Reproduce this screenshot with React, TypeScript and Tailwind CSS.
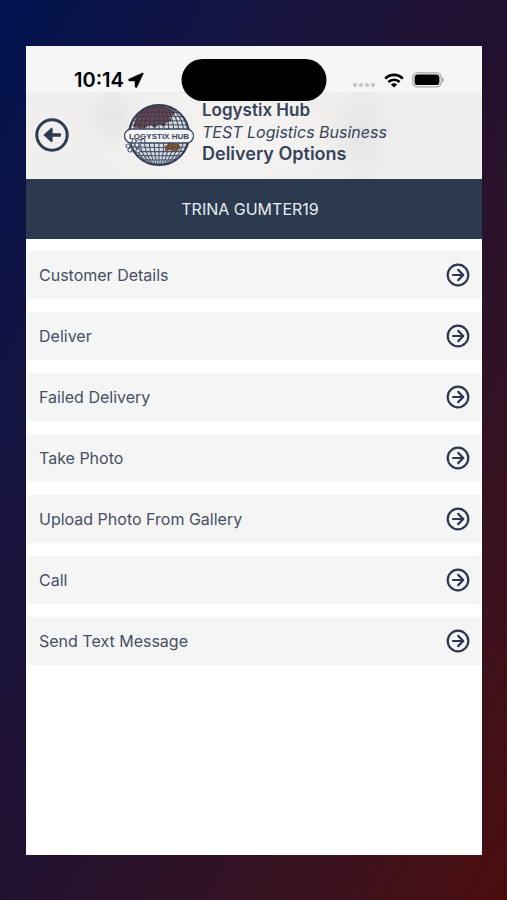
import React from "react";

const options = [
  "Customer Details",
  "Deliver",
  "Failed Delivery",
  "Take Photo",
  "Upload Photo From Gallery",
  "Call",
  "Send Text Message",
];

function LocationArrow() {
  return (
    <svg viewBox="0 0 16 16" className="size-4" aria-hidden="true">
      <path
        d="M14.4 1 L1 7 C.2 7.4 .4 8.9 1.4 8.9 L7 9 L7.1 14.6 C7.1 15.7 8.6 15.8 9 15 L15.2 1.8 C15.5 1.2 15 .7 14.4 1 Z"
        fill="#000"
        stroke="#000"
        strokeWidth=".5"
      />
    </svg>
  );
}

function SignalDots() {
  return (
    <svg viewBox="0 0 24 6" className="mt-2 h-[6px] w-6" aria-hidden="true">
      {[3, 9, 15, 21].map((x) => (
        <circle key={x} cx={x} cy="4" r="2" fill="#c2c2c4" />
      ))}
    </svg>
  );
}

function Wifi() {
  return (
    <svg viewBox="0 0 20 15" className="h-[15px] w-5" aria-hidden="true">
      <g fill="none" stroke="#000" strokeWidth="2.6">
        <path d="M1.2 5.6 C6.2 .6 13.8 .6 18.8 5.6" />
        <path d="M4.4 9 C7.6 5.9 12.4 5.9 15.6 9" />
      </g>
      <path d="M10 14.6 L6.9 11.5 C8.6 9.8 11.4 9.8 13.1 11.5 Z" fill="#000" />
    </svg>
  );
}

function Battery() {
  return (
    <svg viewBox="0 0 32 16" className="h-4 w-8" aria-hidden="true">
      <rect x=".8" y=".8" width="28.4" height="14" rx="4.6" fill="none" stroke="#a5a5a7" strokeWidth="1.2" />
      <rect x="2.6" y="2.5" width="24.8" height="10.6" rx="3.2" fill="#000" />
      <path d="M30.3 5.6 C32.2 6.6 32.2 9.2 30.3 10.2 Z" fill="#8f8f91" />
    </svg>
  );
}

function BackIcon() {
  return (
    <svg viewBox="0 0 34 34" className="size-[34px]" aria-hidden="true">
      <circle cx="17" cy="17" r="15.2" fill="none" stroke="#2c3a52" strokeWidth="3" />
      <path
        d="M8.4 17 L15.8 10.2 C16.6 9.5 17.6 9.9 17.6 10.9 V15.2 H25 C25.7 15.2 26 15.5 26 16 V18 C26 18.5 25.7 18.8 25 18.8 H17.6 V23.1 C17.6 24.1 16.6 24.5 15.8 23.8 Z"
        fill="#2c3a52"
      />
    </svg>
  );
}

function ForwardIcon() {
  return (
    <svg
      viewBox="0 0 24 24"
      className="size-6 shrink-0"
      fill="none"
      stroke="#2c3650"
      strokeLinecap="round"
      strokeLinejoin="round"
      aria-hidden="true"
    >
      <circle cx="12" cy="12" r="10.3" strokeWidth="2.2" />
      <path d="M7 12 H17 M12.2 6.9 L17.3 12 L12.2 17.1" strokeWidth="2.2" />
    </svg>
  );
}

function Logo() {
  const meridians = [5, 10, 15, 20, 25, 29];
  const parallels = [-26, -22, -18, -14, -10, 12, 16, 20, 24, 28];
  return (
    <svg viewBox="0 0 72 64" className="h-16 w-[72px] shrink-0" role="img" aria-label="Logystix Hub">
      <defs>
        <clipPath id="globe">
          <circle cx="36" cy="32" r="30" />
        </clipPath>
      </defs>
      <circle cx="36" cy="32" r="30" fill="#d9dce0" />
      <g clipPath="url(#globe)">
        <g fill="none" stroke="#47536a" strokeWidth="1.1">
          <path d="M36 1 V63" />
          {meridians.map((rx) => (
            <ellipse key={rx} cx="36" cy="32" rx={rx} ry="31" />
          ))}
          {parallels.map((y) => (
            <path key={y} d={`M4 ${32 + y} Q36 ${32 + y * 1.08} 68 ${32 + y}`} />
          ))}
        </g>
        <path
          d="M13 14 L20 6 L30 3 L40 3 L50 7 L52 11 L47 14 L49 18 L43 20 L41 24 L36 21 L32 25 L27 22 L21 26 L10 24 Z"
          fill="#49343f"
          opacity=".85"
        />
        <path d="M42 43 L47 40 L56 41 L58 45 L53 49 L47 47 L42 48 Z" fill="#6d4934" opacity=".9" />
      </g>
      <circle cx="36" cy="32" r="30.2" fill="none" stroke="#2c3a52" strokeWidth="1.8" />
      <rect x="1.5" y="26" width="69" height="14" rx="7" fill="#f4f3f3" stroke="#3a465d" strokeWidth="1.3" />
      <g fill="#f1f0f0" stroke="#596477" strokeWidth="1.2">
        <path d="M5 43 L11 38 L19 36 M7 46 L14 41 L21 39 M11 39 L15 47 L18 42" fill="none" />
        <circle cx="5" cy="43" r="2" />
        <circle cx="7" cy="47" r="2" />
        <circle cx="11" cy="38" r="2" />
        <circle cx="14" cy="42" r="2" />
        <circle cx="15" cy="48" r="2" />
        <circle cx="20" cy="38" r="2" />
      </g>
      <text
        x="36"
        y="36"
        textAnchor="middle"
        className="font-['Liberation_Sans',sans-serif] text-[8px] font-bold"
        fill="#3a4358"
      >
        LOGYSTIX HUB
      </text>
    </svg>
  );
}

export default function App() {
  return (
    <div className="flex min-h-screen flex-col bg-linear-to-br from-[#00134f] via-[#211030] to-[#4b0d0d] pt-[46px] pr-[25px] pb-[45px] pl-[26px] font-[Inter,sans-serif] text-[#464f64]">
      <main className="relative flex grow flex-col bg-white">
        <div className="absolute top-[13px] left-1/2 z-10 h-[42px] w-[145px] -translate-x-1/2 rounded-full bg-black" />

        <div className="flex h-[46px] items-end justify-between bg-[#f6f6f6] pr-[38px] pl-12">
          <div className="flex items-center gap-1 text-xl leading-6 font-semibold text-black">
            <span>10:14</span>
            <LocationArrow />
          </div>
          <div className="flex h-6 items-center gap-2">
            <SignalDots />
            <Wifi />
            <Battery />
          </div>
        </div>

        <header className="flex h-[87px] items-center bg-[#f0efed] bg-[radial-gradient(ellipse_28px_36px_at_86px_24px,#e4e4e2,transparent),radial-gradient(ellipse_36px_60px_at_335px_40px,#e5e5e4,transparent),radial-gradient(ellipse_140px_70px_at_190px_50px,#f6f4f3,transparent)] pb-[2px] pl-[9px]">
          <button type="button" aria-label="Back" className="mr-[54px] shrink-0">
            <BackIcon />
          </button>
          <Logo />
          <div className="ml-[7px] pb-[6px] text-lg leading-[22px] font-semibold whitespace-nowrap text-[#38435b]">
            <p className="text-[17px] leading-[22px]">Logystix Hub</p>
            <p className="text-base leading-[22px] font-normal italic">TEST Logistics Business</p>
            <h1>Delivery Options</h1>
          </div>
        </header>

        <h2 className="flex h-[60px] items-center justify-center bg-[#2c3a50] pr-2 text-base text-[#e6ebf3]">
          TRINA GUMTER19
        </h2>

        <nav aria-label="Delivery options" className="px-px pt-3">
          <ul className="flex flex-col gap-[13px]">
            {options.map((option) => (
              <li key={option}>
                <button
                  type="button"
                  className="flex h-12 w-full items-center justify-between bg-[#f5f5f5] pr-[11px] pl-3 text-left text-base"
                >
                  {option}
                  <ForwardIcon />
                </button>
              </li>
            ))}
          </ul>
        </nav>
      </main>
    </div>
  );
}
